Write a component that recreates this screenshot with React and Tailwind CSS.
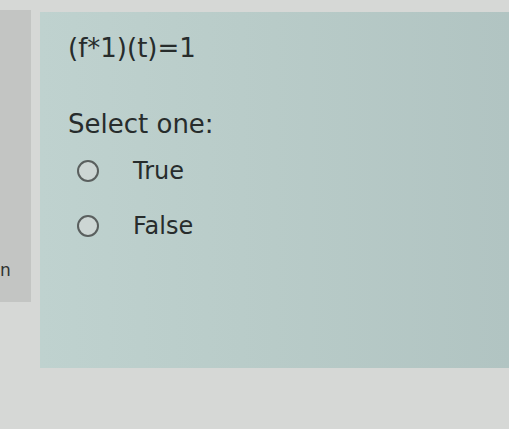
export default function App() {
  const options = ['True', 'False']

  return (
    <div className="w-[509px] h-[429px] overflow-hidden bg-[#d6d8d6] pt-[10px] flex items-start font-['DejaVu_Sans',Verdana,sans-serif] text-[#272c2c]">
      {/* side column (only its last letter shows) */}
      <div className="w-[31px] h-[292px] bg-[#c3c5c3] flex flex-col justify-end pb-[22px] shrink-0">
        <span className="text-[17px] leading-[20px] text-[#2f3332]">n</span>
      </div>

      {/* question panel */}
      <div className="ml-[9px] mt-[2px] flex-1 h-[356px] bg-gradient-to-r from-[#bfd2cf] via-[#b8cbc8] to-[#b1c4c2] pl-[28px] pt-[21px]">
        <p className="text-[26px] leading-[30px]">(f*1)(t)=1</p>

        <p className="mt-[47px] text-[26px] leading-[29px]">Select one:</p>

        <div className="mt-[18px] ml-[9px] flex flex-col gap-[27px]">
          {options.map((opt) => (
            <label key={opt} className="flex items-center h-[28px]">
              <span className="w-[22px] h-[22px] rounded-full border-2 border-[#5a5f5e] bg-[#cdd6d4] shrink-0" />
              <span className="ml-[34px] text-[24px] leading-[28px]">{opt}</span>
            </label>
          ))}
        </div>
      </div>
    </div>
  )
}
